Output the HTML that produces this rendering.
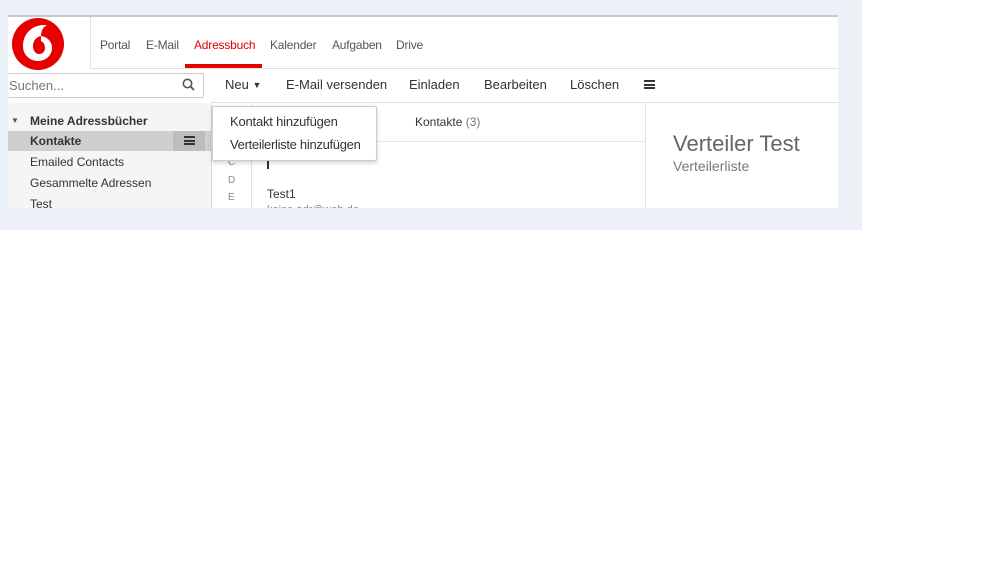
<!DOCTYPE html>
<html><head><style>
*{margin:0;padding:0;box-sizing:border-box}
body{width:999px;height:562px;background:#fff;font-family:"Liberation Sans",sans-serif;position:relative;overflow:hidden;color:#333}
.bg{position:absolute;left:0;top:0;width:862px;height:230px;background:#ecf1f8}
.app{position:absolute;left:8px;top:15px;width:830px;height:193px;background:#fff;border-top:2px solid #c8c8c8;overflow:hidden}
.a{position:absolute;white-space:nowrap}
.nav{font-size:12px;color:#555;top:21px;letter-spacing:-0.2px}
.tb{font-size:13px;color:#333;top:60px}
.side{font-size:12px;color:#333}
.hb{position:absolute;width:11px;height:9px;border-top:2px solid #333;border-bottom:2px solid #333}
.hb:after{content:"";position:absolute;left:0;top:1.5px;width:11px;height:2px;background:#333}
</style></head><body>
<div class="bg"></div>
<div class="app">
  <svg class="a" style="left:3px;top:0px" width="56" height="54" viewBox="0 0 56 54">
    <circle cx="27" cy="27" r="26" fill="#e60000"/>
    <path d="M33 8C22 8 12 16 12 29c0 9 7 15 15 15s14-6 14-13c0-6-4-11-11-12 0-5 2-9 6-11-1 0-2 0-3 0z" fill="#fff"/>
    <path d="M30 19c-5 1-8 5-8 10 0 5 3 8 6 8 4 0 6-3 6-6 0-4-2-6-4-7z" fill="#e60000"/>
  </svg>
  <div class="a" style="left:82px;top:0;width:1px;height:51px;background:#e0e0e0"></div>
  <div class="a" style="left:82px;top:51px;width:748px;height:1px;background:#e0e0e0"></div>
  <div class="a nav" style="left:92px">Portal</div>
  <div class="a nav" style="left:138px">E-Mail</div>
  <div class="a nav" style="left:186px;color:#e60000">Adressbuch</div>
  <div class="a" style="left:177px;top:47px;width:77px;height:4px;background:#e60000"></div>
  <div class="a nav" style="left:262px">Kalender</div>
  <div class="a nav" style="left:324px">Aufgaben</div>
  <div class="a nav" style="left:388px">Drive</div>
  <div class="a" style="left:0;top:56px;width:196px;height:25px;border:1px solid #ccc;border-radius:2px;border-left:none"></div>
  <div class="a" style="left:1px;top:61px;font-size:13px;color:#777">Suchen...</div>
  <svg class="a" style="left:174px;top:61px" width="13" height="13" viewBox="0 0 13 13"><circle cx="5.5" cy="5.5" r="4.2" fill="none" stroke="#555" stroke-width="1.6"/><path d="M8.5 8.5l3.5 3.5" stroke="#555" stroke-width="1.8"/></svg>
  <div class="a" style="left:203px;top:85px;width:627px;height:1px;background:#e0e0e0"></div>
  <div class="a tb" style="left:217px">Neu <span style="font-size:9px;position:relative;top:-1px">▼</span></div>
  <div class="a tb" style="left:278px">E-Mail versenden</div>
  <div class="a tb" style="left:401px">Einladen</div>
  <div class="a tb" style="left:476px">Bearbeiten</div>
  <div class="a tb" style="left:562px">Löschen</div>
  <div class="hb" style="left:636px;top:63px"></div>
  <div class="a" style="left:0;top:86px;width:203px;height:110px;background:#f5f5f5"></div>
  <div class="a" style="left:203px;top:86px;width:1px;height:110px;background:#ddd"></div>
  <div class="a side" style="left:3px;top:99px;font-size:8px;color:#555">▼</div>
  <div class="a side" style="left:22px;top:97px;font-weight:bold">Meine Adressbücher</div>
  <div class="a" style="left:0;top:114px;width:203px;height:20px;background:#cfcfcf"></div>
  <div class="a" style="left:165px;top:114px;width:32px;height:20px;background:#bdbdbd"></div>
  <div class="hb" style="left:176px;top:119px"></div>
  <div class="a side" style="left:22px;top:117px;font-weight:bold">Kontakte</div>
  <div class="a side" style="left:22px;top:138px">Emailed Contacts</div>
  <div class="a side" style="left:22px;top:159px">Gesammelte Adressen</div>
  <div class="a side" style="left:22px;top:180px">Test</div>
  <div class="a" style="left:243px;top:86px;width:1px;height:110px;background:#e0e0e0"></div>
  <div class="a" style="left:220px;top:140px;font-size:10px;color:#888">C</div>
  <div class="a" style="left:220px;top:158px;font-size:10px;color:#888">D</div>
  <div class="a" style="left:220px;top:175px;font-size:10px;color:#888">E</div>
  <div class="a" style="left:244px;top:124px;width:393px;height:1px;background:#e6e6e6"></div>
  <div class="a" style="left:407px;top:98px;font-size:12px">Kontakte <span style="color:#777">(3)</span></div>
  <div class="a" style="left:259px;top:140px;width:2px;height:12px;background:#333"></div>
  <div class="a" style="left:259px;top:170px;font-size:12px">Test1</div>
  <div class="a" style="left:259px;top:187px;font-size:11px;color:#888">keine.adr@web.de</div>
  <div class="a" style="left:637px;top:86px;width:1px;height:110px;background:#e0e0e0"></div>
  <div class="a" style="left:665px;top:114px;font-size:22px;color:#666">Verteiler Test</div>
  <div class="a" style="left:665px;top:141px;font-size:14px;color:#777">Verteilerliste</div>
  <div class="a" style="left:204px;top:89px;width:165px;height:55px;background:#fff;border:1px solid #ccc;box-shadow:0 2px 5px rgba(0,0,0,.18);border-radius:2px"></div>
  <div class="a" style="left:222px;top:97px;font-size:13px;letter-spacing:-0.2px">Kontakt hinzufügen</div>
  <div class="a" style="left:222px;top:120px;font-size:13px;letter-spacing:-0.3px">Verteilerliste hinzufügen</div>
</div>
</body></html>
